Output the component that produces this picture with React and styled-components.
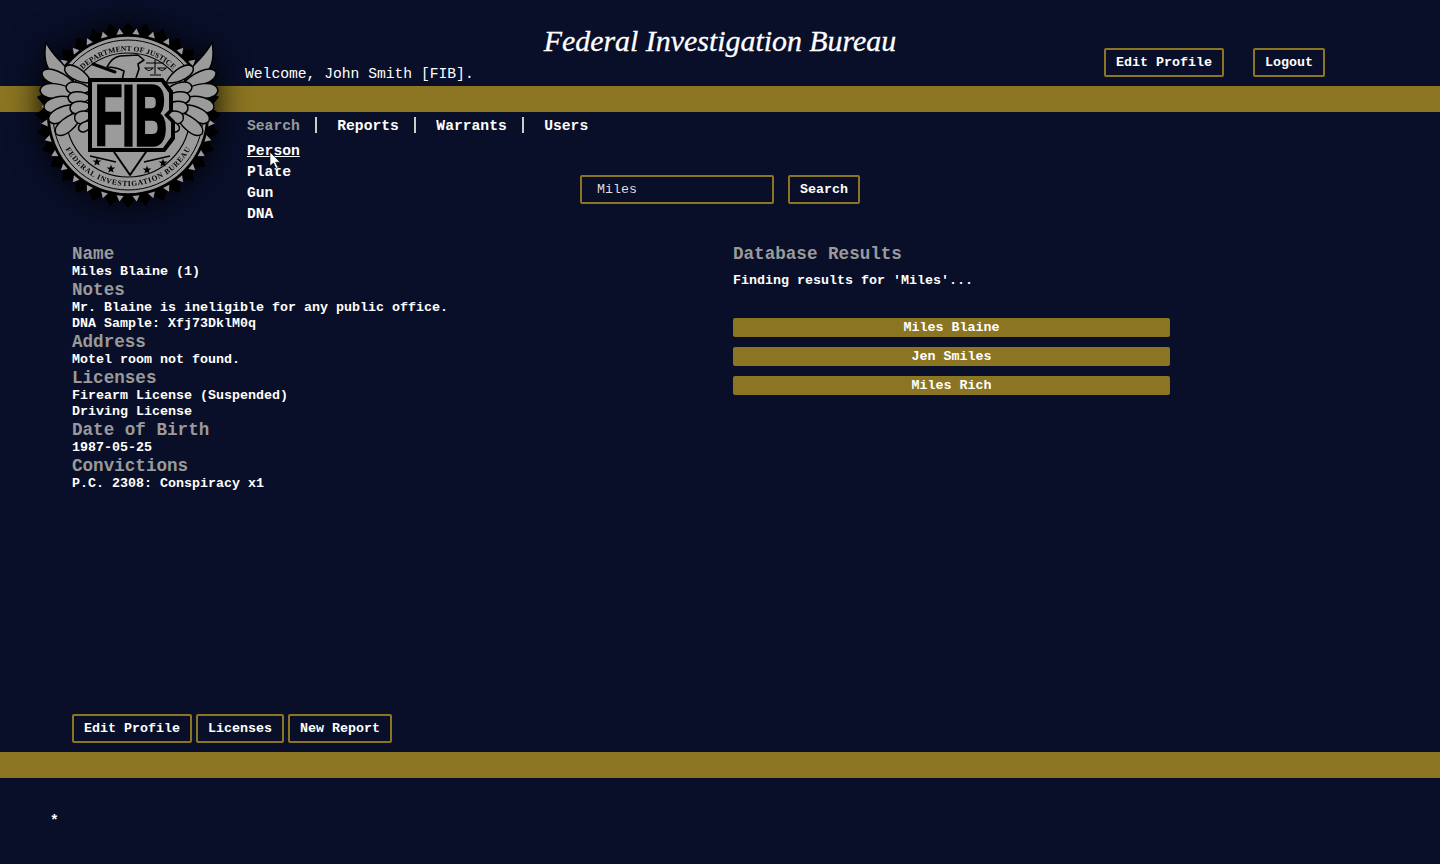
import styled, { createGlobalStyle } from 'styled-components'

const GOLD = '#8b7522'
const NAVY = '#090f29'
const GREY = '#9a9a9a'
const SEAL = '#9b9b9b'

const GlobalStyle = createGlobalStyle`
  html, body {
    margin: 0;
    padding: 0;
    background: ${NAVY};
    color: #fff;
    font-family: 'Liberation Mono', 'Courier New', monospace;
  }
`

const Page = styled.div`
  position: relative;
  display: flex;
  flex-direction: column;
  height: 864px;
  overflow: hidden;
`

const Header = styled.header`
  display: grid;
  grid-template-columns: 1fr auto 1fr;
  height: 86px;
`

const Welcome = styled.div`
  align-self: end;
  padding: 0 0 4px 245px;
  font-size: 14.67px;
  line-height: 16px;
`

const Title = styled.h1`
  margin: 0;
  padding-top: 24px;
  font-family: 'Liberation Serif', 'Times New Roman', serif;
  font-size: 29.9px;
  line-height: 34px;
  font-style: italic;
  font-weight: 400;
  white-space: nowrap;
  -webkit-text-stroke: 0.3px #fff;
`

const HeaderActions = styled.div`
  display: flex;
  justify-content: flex-end;
  gap: 29px;
  padding: 48px 115px 0 0;
`

const Button = styled.button`
  box-sizing: border-box;
  height: 29px;
  padding: 0 10px;
  border: 2px solid ${GOLD};
  border-radius: 2px;
  background: ${NAVY};
  color: #fff;
  font-family: 'Liberation Mono', 'Courier New', monospace;
  font-size: 13.33px;
  font-weight: 700;
  white-space: nowrap;
`

const Bar = styled.div`
  flex: none;
  height: 26px;
  background: ${GOLD};
`

const Tabs = styled.nav`
  display: flex;
  align-items: center;
  height: 16px;
  padding: 5px 0 0 247px;
`

const Tab = styled.a`
  display: block;
  height: 16px;
  padding: 0 15.5px 0 20px;
  border-right: 2px solid #ccc;
  color: ${(p) => (p.$active ? GREY : '#fff')};
  font-size: 14.67px;
  font-weight: 700;
  line-height: 18px;

  &:first-child {
    padding-left: 0;
  }
  &:last-child {
    border-right: 0;
  }
`

const ToolRow = styled.div`
  display: flex;
  height: 106px;
  padding: 0 0 0 247px;
`

const SubMenu = styled.ul`
  width: 333px;
  margin: 0;
  padding: 8px 0 0;
  list-style: none;
`

const SubItem = styled.li`
  height: 21px;
  font-size: 14.67px;
  font-weight: 700;
  line-height: 21px;
  text-decoration: ${(p) => (p.$active ? 'underline' : 'none')};
`

const SearchForm = styled.form`
  display: flex;
  gap: 14px;
  padding-top: 42px;
`

const SearchInput = styled.input`
  box-sizing: border-box;
  width: 194px;
  height: 29px;
  padding: 0 15px;
  border: 2px solid ${GOLD};
  border-radius: 2px;
  outline: 0;
  background: ${NAVY};
  color: #ddd;
  font-family: 'Liberation Mono', 'Courier New', monospace;
  font-size: 13.33px;
`

const Main = styled.main`
  flex: 1;
  display: flex;
  padding-top: 5px;
`

const Profile = styled.section`
  width: 661px;
  padding-left: 72px;
`

const Results = styled.section`
  width: 437px;
`

const Heading = styled.h2`
  margin: 0;
  color: ${GREY};
  font-size: 17.6px;
  font-weight: 700;
  line-height: 20px;
`

const Line = styled.p`
  margin: 0;
  font-size: 13.33px;
  font-weight: 700;
  line-height: 16px;
`

const Finding = styled(Line)`
  margin: 9px 0 29px;
`

const ResultList = styled.div`
  display: flex;
  flex-direction: column;
  gap: 10px;
`

const Result = styled.div`
  height: 19px;
  border-radius: 2px;
  background: ${GOLD};
  font-size: 13.33px;
  font-weight: 700;
  line-height: 19px;
  text-align: center;
`

const Actions = styled.div`
  display: flex;
  gap: 4px;
  padding: 0 0 9px 72px;
`

const Footer = styled.footer`
  height: 86px;
  padding: 35px 0 0 50px;
  box-sizing: border-box;
  font-size: 14.67px;
  font-weight: 700;
  line-height: 16px;
`

const LogoWrap = styled.div`
  position: absolute;
  top: 15px;
  left: 28px;
  width: 200px;
  height: 200px;
  filter: drop-shadow(0 0 16px rgba(0, 0, 0, 0.9));
`

const Cursor = styled.svg`
  position: absolute;
  top: 151px;
  left: 269px;
`

const polar = (r, deg) => {
  const a = (deg * Math.PI) / 180
  return [100 + r * Math.cos(a), 100 + r * Math.sin(a)]
}

const burst = Array.from({ length: 64 }, (_, i) =>
  polar(i % 2 ? 83 : 93, i * 5.625).map((n) => n.toFixed(1)).join(',')
).join(' ')

const teeth = Array.from({ length: 32 }, (_, i) => {
  const mid = i * 11.25 + 5.6
  const pts = [polar(81, mid - 2.5), polar(87, mid), polar(81, mid + 2.5)]
  return pts.map((p) => p.map((n) => n.toFixed(1)).join(',')).join(' ')
})

const star = (cx, cy, r) =>
  Array.from({ length: 10 }, (_, i) => {
    const a = ((i * 36 - 90) * Math.PI) / 180
    const rad = i % 2 ? r * 0.42 : r
    return `${(cx + rad * Math.cos(a)).toFixed(1)},${(cy + rad * Math.sin(a)).toFixed(1)}`
  }).join(' ')

// one feather, from its root at the shield out to a rounded tip
const leaf = ([bx, by], [tx, ty], w) => {
  const dx = tx - bx
  const dy = ty - by
  const len = Math.hypot(dx, dy)
  const nx = (-dy / len) * w
  const ny = (dx / len) * w
  const near = (t, s) => `${(bx + dx * t + nx * s).toFixed(1)} ${(by + dy * t + ny * s).toFixed(1)}`
  return `M${bx} ${by} C${near(0.4, 1)} ${near(0.95, 1)} ${tx} ${ty} C${near(0.95, -1)} ${near(0.4, -1)} ${bx} ${by} Z`
}

const outerFeathers = [
  leaf([50, 72], [14, 57], 9),
  leaf([50, 78], [12, 75], 10),
  leaf([50, 84], [16, 93], 10),
  leaf([50, 90], [21, 106], 9),
  leaf([56, 96], [28, 119], 9)
]

const innerFeathers = [
  leaf([64, 68], [37, 52], 8),
  leaf([64, 75], [38, 72], 8),
  leaf([64, 82], [40, 83], 8),
  leaf([64, 90], [42, 94], 8),
  leaf([64, 98], [47, 105], 8),
  leaf([66, 106], [51, 115], 6)
]

function Wing({ flip }) {
  return (
    <g transform={flip ? 'translate(202 0) scale(-1 1)' : undefined} fill={SEAL} stroke="#000" strokeWidth="1.5" strokeLinejoin="round">
      <path d="M18 27 C16 38 16 50 24 58 C30 64 38 66 46 68 C44 60 40 54 34 48 C28 42 22 36 18 27 Z" />
      {outerFeathers.map((d) => (
        <path key={d} d={d} />
      ))}
      {innerFeathers.map((d) => (
        <path key={d} d={d} />
      ))}
    </g>
  )
}

function Logo() {
  return (
    <svg width="200" height="200" viewBox="0 0 200 200">
      <polygon points={burst} fill="#000" />
      {teeth.map((pts) => (
        <polygon key={pts} points={pts} fill={SEAL} />
      ))}
      <circle cx="100" cy="100" r="79" fill={SEAL} stroke="#000" strokeWidth="1.5" />
      <circle cx="100" cy="100" r="62" fill="none" stroke="#000" strokeWidth="1.2" />
      <circle cx="100" cy="100" r="75" fill="none" stroke="#000" strokeWidth="1" />
      <Wing />
      <Wing flip />
      <path id="sealTop" d="M36 100 A64 64 0 0 1 164 100" fill="none" />
      <path id="sealBottom" d="M29 100 A71 71 0 0 0 171 100" fill="none" />
      <text fontFamily="'Liberation Serif', serif" fontSize="7.5" fontWeight="700" fill="#000">
        <textPath href="#sealTop" startOffset="50%" textAnchor="middle" textLength="100">
          DEPARTMENT OF JUSTICE
        </textPath>
      </text>
      <text fontFamily="'Liberation Serif', serif" fontSize="7.5" fontWeight="700" fill="#000">
        <textPath href="#sealBottom" startOffset="50%" textAnchor="middle" textLength="152">
          FEDERAL INVESTIGATION BUREAU
        </textPath>
      </text>
      <path
        d="M79 52 C82 46 86 42 92 41 L110 40 L116 45 L110 49 L111 54 L107 66 H94 L96 56 C90 53 84 52 79 52 Z"
        fill={SEAL}
        stroke="#000"
        strokeWidth="1.6"
        strokeLinejoin="round"
      />
      <path d="M65 49 L87 57" stroke="#000" strokeWidth="3" strokeLinecap="round" />
      <g stroke="#000" strokeWidth="1.1" fill="none">
        <path d="M127 45 V59 M122 60 H133 M118 48 H136" />
        <path d="M117 53 Q121 58 125 53 Z M130 53 Q134 58 138 53 Z" />
      </g>
      <path d="M62 141 L88 147 M142 141 L116 147" stroke="#000" strokeWidth="1.6" />
      <polygon points="84,134 102,160 120,134" fill={SEAL} stroke="#000" strokeWidth="2" strokeLinejoin="round" />
      <polygon points="60,63 135,63 145,76 145,96 141,100 147,106 147,124 137,137 60,137" fill="#000" />
      <polygon points="64,67 133,67 141,78 141,95 136,100 143,107 143,122 135,133 64,133" fill={SEAL} />
      <text
        x="67"
        y="130"
        fontFamily="'Liberation Sans', sans-serif"
        fontSize="86"
        fontWeight="700"
        textLength="72"
        lengthAdjust="spacingAndGlyphs"
        fill="#000"
        stroke="#000"
        strokeWidth="3.5"
      >
        FIB
      </text>
      {[
        [69, 147],
        [83, 154],
        [119, 155],
        [135, 148]
      ].map(([x, y]) => (
        <polygon key={x} points={star(x, y, 4.5)} fill="#000" />
      ))}
    </svg>
  )
}

const tabs = ['Search', 'Reports', 'Warrants', 'Users']
const subItems = ['Person', 'Plate', 'Gun', 'DNA']
const results = ['Miles Blaine', 'Jen Smiles', 'Miles Rich']

const profile = [
  ['Name', ['Miles Blaine (1)']],
  ['Notes', ['Mr. Blaine is ineligible for any public office.', 'DNA Sample: Xfj73DklM0q']],
  ['Address', ['Motel room not found.']],
  ['Licenses', ['Firearm License (Suspended)', 'Driving License']],
  ['Date of Birth', ['1987-05-25']],
  ['Convictions', ['P.C. 2308: Conspiracy x1']]
]

function App() {
  return (
    <Page>
      <GlobalStyle />
      <Header>
        <Welcome>Welcome, John Smith [FIB].</Welcome>
        <Title>Federal Investigation Bureau</Title>
        <HeaderActions>
          <Button>Edit Profile</Button>
          <Button>Logout</Button>
        </HeaderActions>
      </Header>
      <Bar />
      <Tabs>
        {tabs.map((tab) => (
          <Tab key={tab} $active={tab === 'Search'}>
            {tab}
          </Tab>
        ))}
      </Tabs>
      <ToolRow>
        <SubMenu>
          {subItems.map((item) => (
            <SubItem key={item} $active={item === 'Person'}>
              {item}
            </SubItem>
          ))}
        </SubMenu>
        <SearchForm>
          <SearchInput defaultValue="Miles" />
          <Button type="button">Search</Button>
        </SearchForm>
      </ToolRow>
      <Main>
        <Profile>
          {profile.map(([title, lines]) => (
            <div key={title}>
              <Heading>{title}</Heading>
              {lines.map((line) => (
                <Line key={line}>{line}</Line>
              ))}
            </div>
          ))}
        </Profile>
        <Results>
          <Heading>Database Results</Heading>
          <Finding>Finding results for 'Miles'...</Finding>
          <ResultList>
            {results.map((name) => (
              <Result key={name}>{name}</Result>
            ))}
          </ResultList>
        </Results>
      </Main>
      <Actions>
        <Button>Edit Profile</Button>
        <Button>Licenses</Button>
        <Button>New Report</Button>
      </Actions>
      <Bar />
      <Footer>*</Footer>
      <LogoWrap>
        <Logo />
      </LogoWrap>
      <Cursor width="14" height="20" viewBox="0 0 14 20">
        <path d="M1 1 V15 L4.5 12 L7 17.5 L9 16.5 L6.6 11.2 H11 Z" fill="#fff" stroke="#000" strokeWidth="0.6" />
      </Cursor>
    </Page>
  )
}

export default App
